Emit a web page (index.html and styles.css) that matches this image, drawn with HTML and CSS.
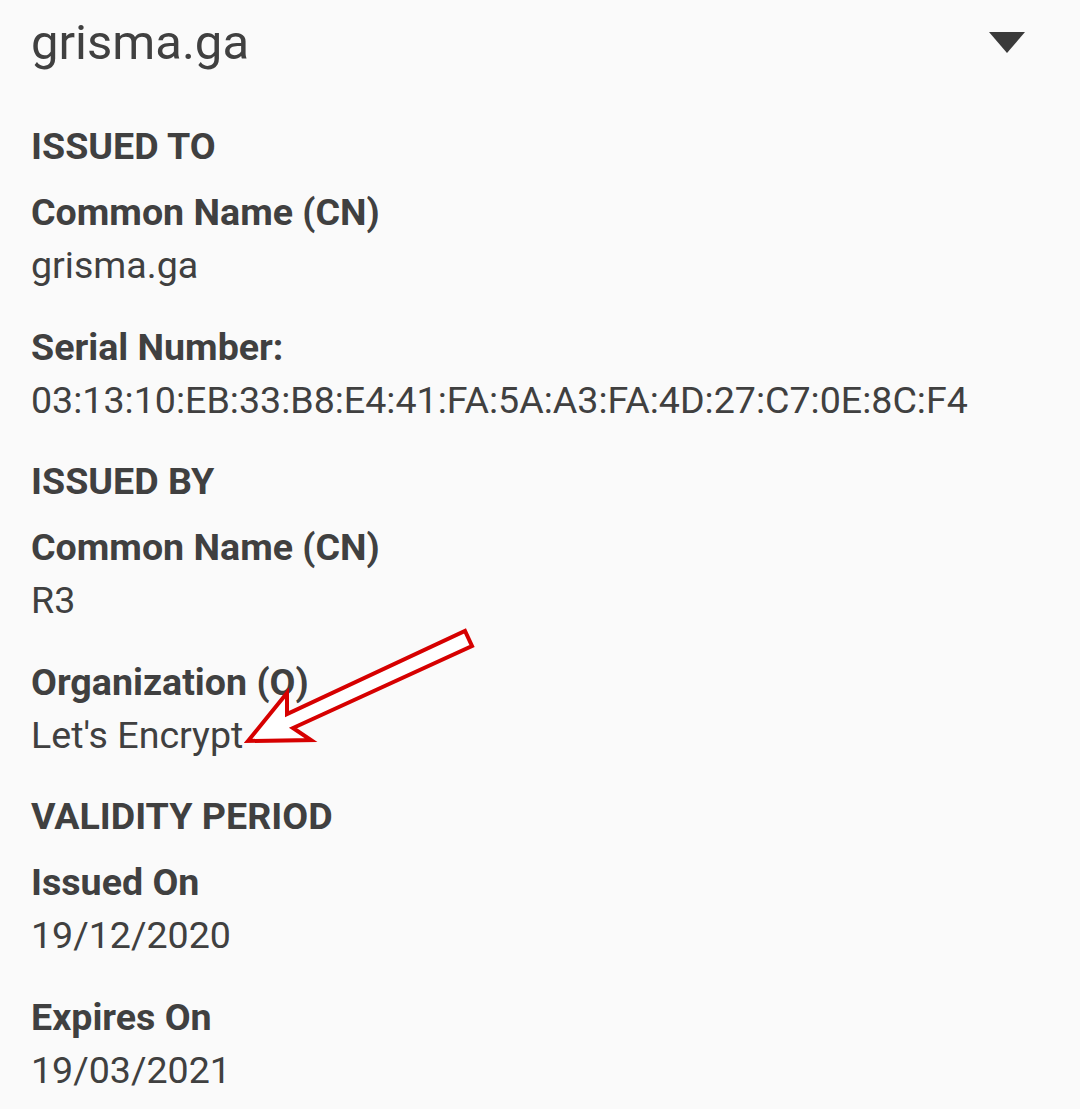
FILE: index.html
```html
<!DOCTYPE html>
<html lang="en">
<head>
    <meta charset="UTF-8">
    <meta name="viewport" content="width=device-width, initial-scale=1.0">
    <title>Certificate</title>
    <link rel="stylesheet" href="styles.css">
</head>
<body>
    <div class="cert">
        <div class="head">
            <span class="host">grisma.ga</span>
            <span class="caret"></span>
        </div>

        <h3 class="sect">ISSUED TO</h3>
        <div class="field">
            <div class="lbl">Common Name (CN)</div>
            <div class="val">grisma.ga</div>
        </div>
        <div class="field">
            <div class="lbl">Serial Number:</div>
            <div class="val">03:13:10:EB:33:B8:E4:41:FA:5A:A3:FA:4D:27:C7:0E:8C:F4</div>
        </div>

        <h3 class="sect">ISSUED BY</h3>
        <div class="field">
            <div class="lbl">Common Name (CN)</div>
            <div class="val">R3</div>
        </div>
        <div class="field org">
            <div class="lbl">Organization (O)</div>
            <div class="val">Let's Encrypt</div>
            <svg class="arrow" width="250" height="130" viewBox="0 0 250 130">
                <polygon points="8,115 47,67 47,88 225,5 232,20 53,102 71,114"
                         fill="#fff" stroke="#d60000" stroke-width="4" stroke-linejoin="miter"/>
            </svg>
        </div>

        <h3 class="sect">VALIDITY PERIOD</h3>
        <div class="field">
            <div class="lbl">Issued On</div>
            <div class="val">19/12/2020</div>
        </div>
        <div class="field">
            <div class="lbl">Expires On</div>
            <div class="val">19/03/2021</div>
        </div>
    </div>
</body>
</html>
```

FILE: styles.css
```css
body{
    margin: 0;
    background: #fafafa;
    font-family: Roboto, "Noto Sans", Arial, sans-serif;
    color: #404040;
}
.cert{
    padding: 0 55px 0 31px;
}
.head{
    display: flex;
    justify-content: space-between;
    align-items: center;
    height: 84px;
    margin-bottom: 36px;
}
.host{
    font-size: 49px;
}
.caret{
    width: 0;
    height: 0;
    border-left: 18px solid transparent;
    border-right: 18px solid transparent;
    border-top: 21px solid #3a3a3a;
}
.sect{
    margin: 0 0 13px 0;
    font-size: 37.6px;
    line-height: 53px;
    font-weight: 700;
}
.field{
    margin-bottom: 28.5px;
    font-size: 37.6px;
    line-height: 53px;
}
.lbl{
    font-weight: 700;
}
.org{
    position: relative;
}
.arrow{
    position: absolute;
    left: 209px;
    top: -30px;
}
```
